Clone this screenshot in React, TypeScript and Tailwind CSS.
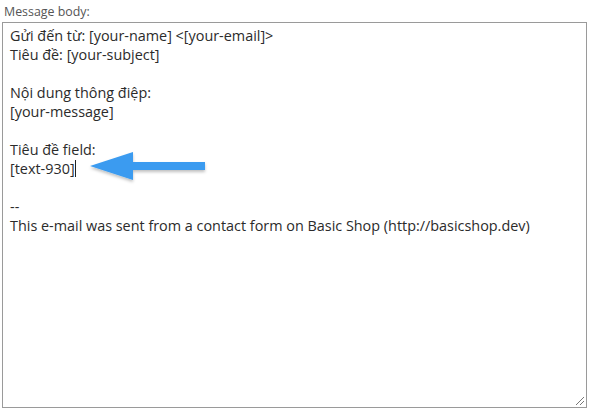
import React from "react";

export default function App() {
  const font = { fontFamily: '"Open Sans", "Noto Sans", sans-serif' };
  return (
    <div className="w-[590px] h-[411px] bg-white relative overflow-hidden" style={font}>
      <div className="pl-[4px] pt-[3px] text-[12.4px] leading-[17px] text-[#555]">Message body:</div>
      <div className="relative ml-[2px] mt-[2px] w-[585px] h-[386px] border border-[#9a9a9a] px-[7px] pt-[3px] text-[14.4px] leading-[19px] text-[#2b2b2b]">
        <div>Gửi đến từ: [your-name] &lt;[your-email]&gt;</div>
        <div>Tiêu đề: [your-subject]</div>
        <div className="h-[19px]" />
        <div>Nội dung thông điệp:</div>
        <div>[your-message]</div>
        <div className="h-[19px]" />
        <div>Tiêu đề field:</div>
        <div className="flex items-center">
          <span>[text-930]</span>
          <span className="inline-block w-px h-[17px] bg-[#222]" />
        </div>
        <div className="h-[19px]" />
        <div>--</div>
        <div>This e-mail was sent from a contact form on Basic Shop (http://basicshop.dev)</div>
        <svg className="absolute right-[1px] bottom-[1px]" width="12" height="12" viewBox="0 0 12 12">
          <line x1="11" y1="3" x2="3" y2="11" stroke="#777" strokeWidth="1" />
          <line x1="11" y1="7" x2="7" y2="11" stroke="#777" strokeWidth="1" />
        </svg>
      </div>
      <svg className="absolute left-[86px] top-[148px]" width="126" height="38" viewBox="0 0 126 38">
        <defs>
          <filter id="sh" x="-10%" y="-20%" width="120%" height="150%">
            <feDropShadow dx="0" dy="2" stdDeviation="1.5" floodColor="#000" floodOpacity="0.25" />
          </filter>
        </defs>
        <path d="M4 18 L47 4 L47 14 L119 14 L119 22 L47 22 L47 32 Z" fill="#3a9bf0" filter="url(#sh)" />
      </svg>
    </div>
  );
}
